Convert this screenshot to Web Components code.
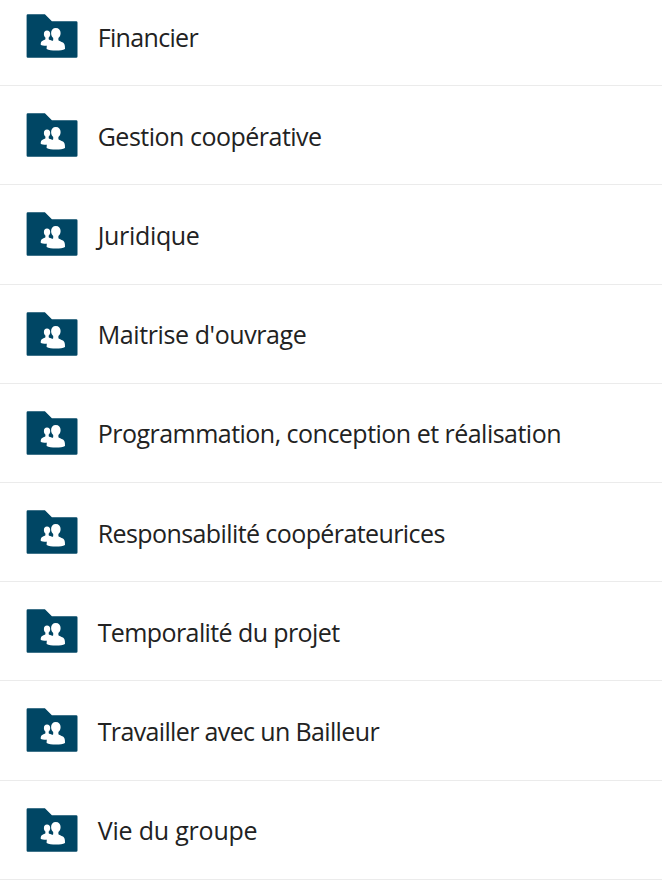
<!DOCTYPE html>
<html lang="fr">
<head>
<meta charset="utf-8">
<title>Dossiers</title>
<style>
  html, body { margin: 0; height: 100%; overflow: hidden; background: #fff; }
  body { font-family: "Segoe UI", "Open Sans", "Noto Sans", sans-serif; color: #222; }
</style>
</head>
<body>
<folder-list>
  <folder-row style="--tracking: -.66px">Financier</folder-row>
  <folder-row style="--tracking: -.5px">Gestion coopérative</folder-row>
  <folder-row style="--tracking: -.33px">Juridique</folder-row>
  <folder-row style="--tracking: -.4px">Maitrise d'ouvrage</folder-row>
  <folder-row style="--tracking: -.52px">Programmation, conception et réalisation</folder-row>
  <folder-row style="--tracking: -.59px">Responsabilité coopérateurices</folder-row>
  <folder-row style="--tracking: -.6px">Temporalité du projet</folder-row>
  <folder-row style="--tracking: -.64px">Travailler avec un Bailleur</folder-row>
  <folder-row style="--tracking: -.2px">Vie du groupe</folder-row>
</folder-list>

<script>
(function () {
  class SharedFolderIcon extends HTMLElement {
    constructor() {
      super();
      this.attachShadow({ mode: 'open' });
      this.shadowRoot.innerHTML = `
        <style>
          :host { display: block; flex: none; width: 52px; height: 44px; }
          svg { display: block; }
        </style>
        <svg width="52" height="44" viewBox="0 0 52 44" aria-hidden="true">
          <path fill="#004664" d="M1.8 .2H18.9L25.9 7.2H50.2Q51.5 7.2 51.5 8.5V42.4Q51.5 43.7 50.2 43.7H1.8Q.6 43.7 .6 42.5V1.4Q.6 .2 1.8 .2Z"/>
          <g fill="#fff">
            <path d="M21 16.6C23.1 16.6 24.2 18 24.2 20C24.2 21.7 23.6 22.8 22.7 23.5V25.3C23.2 26 24.8 26.3 26 26.7V31.8H20.4C17.5 31.8 15.6 31.5 14.7 30.8C14.7 28.8 15 27.6 16.2 26.9C17.2 26.3 18.9 26 19.4 25.3V23.5C18.5 22.8 17.9 21.7 17.9 20C17.9 18 19 16.6 21 16.6Z"/>
            <path d="M29.8 14.1C32.8 14.1 34.6 16.1 34.6 19.1C34.6 21.3 33.8 23 32.4 24V26.2C33 27 35.3 27.6 37 28.6C38.6 29.6 39 31.5 39 35C37 36.1 33.9 36.6 30 36.6C26 36.6 22.6 36.1 20.6 35C20.6 31.3 21.4 29.5 23 28.5C24.5 27.6 26.7 27 27.2 26.2V24C25.9 23 25.1 21.3 25.1 19.1C25.1 16.1 26.8 14.1 29.8 14.1Z"/>
          </g>
        </svg>
      `;
    }
  }

  class FolderRow extends HTMLElement {
    constructor() {
      super();
      this.attachShadow({ mode: 'open' });
      this.shadowRoot.innerHTML = `
        <style>
          :host {
            display: flex; align-items: flex-start; gap: 19.7px; box-sizing: border-box;
            height: 99.2px; padding: 27px 26px 0; border-bottom: 1px solid #ebebeb;
          }
          .name { font-size: 25px; line-height: 34px; padding-top: 5.6px; white-space: nowrap; letter-spacing: var(--tracking, 0); }
        </style>
        <shared-folder-icon></shared-folder-icon>
        <div class="name"><slot></slot></div>
      `;
    }
  }

  class FolderList extends HTMLElement {
    constructor() {
      super();
      this.attachShadow({ mode: 'open' });
      // the list is scrolled a little, so the first row starts above the window
      this.shadowRoot.innerHTML = `
        <style>
          :host { display: flow-root; }
          .rows { display: flex; flex-direction: column; margin-top: -13px; }
        </style>
        <div class="rows"><slot></slot></div>
      `;
    }
  }

  customElements.define('shared-folder-icon', SharedFolderIcon);
  customElements.define('folder-row', FolderRow);
  customElements.define('folder-list', FolderList);
})();
</script>
</body>
</html>
